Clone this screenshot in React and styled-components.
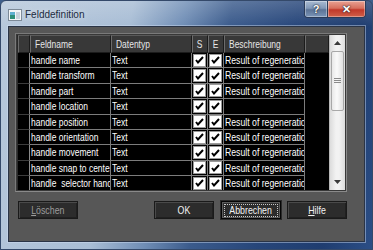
import React from "react";
import styled, { createGlobalStyle } from "styled-components";

const Global = createGlobalStyle`
  html, body { margin: 0; padding: 0; background: #3f5f8c; }
  body { width: 373px; height: 250px; overflow: hidden; }
`;

const SANS = `"Liberation Sans", Arial, sans-serif`;

const Window = styled.div`
  width: 373px;
  height: 250px;
  box-sizing: border-box;
  display: flex;
  flex-direction: column;
  border-radius: 6px 6px 0 0;
  border: 1px solid #34496a;
  background:
    linear-gradient(180deg, rgba(255,255,255,0.18) 0px, rgba(255,255,255,0) 26px),
    linear-gradient(100deg, #b7c8db 0%, #a8bdd5 32%, #6f8db5 45%, #3b5b8c 56%, #27467a 72%, #1f3d70 88%, #2b4e86 100%);
`;

const TitleBar = styled.div`
  height: 25px;
  display: flex;
  align-items: flex-start;
  padding-left: 6px;
  padding-right: 6px;
`;

const TitleIcon = styled.svg`
  width: 16px;
  height: 16px;
  margin-top: 6px;
  flex: none;
`;

const Title = styled.div`
  margin-left: 2px;
  margin-top: 8px;
  font-family: ${SANS};
  font-size: 10px;
  color: #1c2a3e;
  text-shadow: 0 0 6px rgba(255,255,255,0.7);
  flex: 1;
`;

const CaptionGroup = styled.div`
  display: flex;
  border: 1px solid #2a3b58;
  border-top: none;
  border-radius: 0 0 4px 4px;
  overflow: hidden;
  height: 16px;
`;

const CaptionButton = styled.div`
  width: ${p => p.$w}px;
  height: 16px;
  display: flex;
  align-items: center;
  justify-content: center;
  box-sizing: border-box;
  color: #fff;
  font-family: ${SANS};
  font-weight: bold;
  font-size: 11px;
  text-shadow: 0 0 2px #223, 0 0 1px #000;
  background: ${p => p.$close
    ? "linear-gradient(180deg, #e8a293 0%, #d6705e 45%, #c1392a 55%, #d0604a 100%)"
    : "linear-gradient(180deg, #a9bbd2 0%, #8299b8 45%, #5b7396 55%, #7b95b8 100%)"};
  box-shadow: inset 0 0 0 1px rgba(255,255,255,0.35);
  & + & { border-left: 1px solid #2a3b58; }
`;

const Client = styled.div`
  flex: 1;
  margin: 0 7px 7px 7px;
  background: #575757;
  border: 1px solid #2a3446;
  box-shadow: 0 0 0 1px rgba(210,225,245,0.45);
  display: flex;
  flex-direction: column;
  padding: 6px 17px 0 6px;
`;

const TableFrame = styled.div`
  height: 159px;
  box-sizing: border-box;
  border: 1px solid #7a7a7a;
  border-right-color: #8a8a8a;
  border-bottom-color: #8a8a8a;
  display: flex;
  background: #383838;
  padding: 1px;
`;

const GridArea = styled.div`
  flex: 1;
  background: #000;
  overflow: hidden;
  border-left: 1px solid #2a2a2a;
`;

const COLS = "12px 81px 81px 16px 16px 81px 1fr";

const Txt = styled.span`
  display: inline-block;
  white-space: pre;
  transform: scaleX(${p => p.$sx || 0.77});
  transform-origin: ${p => (p.$mid ? "center" : "left")} center;
`;

const HeaderRow = styled.div`
  display: grid;
  grid-template-columns: ${COLS};
  height: 18px;
  background: #363636;
`;

const HeaderCell = styled.div`
  box-sizing: border-box;
  border-left: 1px solid #6c6c6c;
  border-top: 1px solid #5a5a5a;
  border-right: 1px solid #1c1c1c;
  border-bottom: 1px solid #1c1c1c;
  background: #383838;
  color: #e6e6e6;
  font-family: ${SANS};
  font-size: 11px;
  line-height: 16px;
  padding-left: ${p => (p.$center ? 0 : 4)}px;
  text-align: ${p => (p.$center ? "center" : "left")};
  white-space: nowrap;
  overflow: hidden;
`;

const DataRow = styled.div`
  display: grid;
  grid-template-columns: ${COLS};
  height: 15.4px;
`;

const Cell = styled.div`
  box-sizing: border-box;
  border-right: ${p => (p.$noline ? "none" : "1px solid #7c7c7c")};
  border-bottom: ${p => (p.$noline ? "none" : "1px solid #7c7c7c")};
  background: #000;
  color: #fff;
  font-family: ${SANS};
  font-size: 11px;
  line-height: 14px;
  padding-left: 1px;
  white-space: nowrap;
  overflow: hidden;
`;

const RowHead = styled(Cell)`
  border-right: 1px solid #8a8a8a;
  border-bottom: 1px solid #3c3c3c;
`;

const CheckCell = styled(Cell)`
  display: flex;
  align-items: center;
  justify-content: center;
  padding: 0;
`;

const CheckBox = styled.div`
  width: 13px;
  height: 13px;
  box-sizing: border-box;
  background: #fff;
  border: 1px solid #9a9a9a;
  display: flex;
  align-items: center;
  justify-content: center;
`;

const Scrollbar = styled.div`
  width: 15px;
  display: flex;
  flex-direction: column;
  background: linear-gradient(90deg, #dcdcdc 0%, #f2f2f2 40%, #f2f2f2 60%, #dcdcdc 100%);
  border-left: 1px solid #b8b8b8;
`;

const ArrowButton = styled.div`
  height: 16px;
  display: flex;
  align-items: center;
  justify-content: center;
`;

const Thumb = styled.div`
  height: 60px;
  margin: 0 1px;
  box-sizing: border-box;
  border: 1px solid #a8a8a8;
  border-radius: 2px;
  background: linear-gradient(90deg, #e8e8e8 0%, #fafafa 45%, #e0e0e0 100%);
  display: flex;
  align-items: center;
  justify-content: center;
`;

const Track = styled.div`
  flex: 1;
`;

const ButtonRow = styled.div`
  display: flex;
  margin-top: 9px;
  padding-left: 3px;
`;

const Button = styled.div`
  width: 60px;
  height: 18px;
  box-sizing: border-box;
  margin-left: ${p => p.$ml || 0}px;
  background: #2c2c2c;
  border: ${p => (p.$focus ? "1px solid #050505" : "1px solid #1a1a1a")};
  box-shadow: ${p => (p.$focus
    ? "inset 0 0 0 1px #5c5c5c, 0 0 0 1px #2a2a2a"
    : "inset 1px 1px 0 #4a4a4a, inset -1px -1px 0 #202020")};
  color: ${p => (p.$disabled ? "#9c9c9c" : "#f2f2f2")};
  font-family: ${SANS};
  font-size: 11px;
  display: flex;
  align-items: center;
  justify-content: center;
  overflow: hidden;
`;

const FocusRing = styled.div`
  width: 54px;
  height: 13px;
  box-sizing: border-box;
  border: 1px dotted #c8c8c8;
  display: flex;
  align-items: center;
  justify-content: center;
  line-height: 11px;
`;

const Spacer = styled.div`
  flex: 1;
`;

const U = styled.span`
  text-decoration: underline;
`;

const rows = [
  ["handle name", "Text", true],
  ["handle transform", "Text", true],
  ["handle part", "Text", true],
  ["handle location", "Text", false],
  ["handle position", "Text", true],
  ["handle orientation", "Text", true],
  ["handle movement", "Text", true],
  ["handle snap to center", "Text", true],
  ["handle  selector handle", "Text", true],
];

const Check = () => (
  <svg width="9" height="8" viewBox="0 0 9 8">
    <path d="M1 4 L3 6.5 L8 1" fill="none" stroke="#000" strokeWidth="2" />
  </svg>
);

export default function App() {
  return (
    <>
      <Global />
      <Window>
        <TitleBar>
          <TitleIcon viewBox="0 0 16 16">
            <rect x="1.5" y="2.5" width="13" height="11" fill="#f4f6f8" stroke="#7d8a98" />
            <rect x="3" y="5" width="5" height="7" fill="#2f8f7a" />
            <rect x="3" y="5" width="5" height="3" fill="#5fb0d0" />
            <rect x="9" y="5" width="4" height="7" fill="#c9d3dc" />
          </TitleIcon>
          <Title>Felddefinition</Title>
          <CaptionGroup>
            <CaptionButton $w={22}>?</CaptionButton>
            <CaptionButton $w={38} $close>✕</CaptionButton>
          </CaptionGroup>
        </TitleBar>
        <Client>
          <TableFrame>
            <GridArea>
              <HeaderRow>
                <HeaderCell />
                <HeaderCell><Txt>Feldname</Txt></HeaderCell>
                <HeaderCell><Txt>Datentyp</Txt></HeaderCell>
                <HeaderCell $center><Txt $mid>S</Txt></HeaderCell>
                <HeaderCell $center><Txt $mid>E</Txt></HeaderCell>
                <HeaderCell><Txt>Beschreibung</Txt></HeaderCell>
                <HeaderCell />
              </HeaderRow>
              {rows.map(([name, type, desc], i) => (
                <DataRow key={i}>
                  <RowHead />
                  <Cell><Txt>{name}</Txt></Cell>
                  <Cell><Txt>{type}</Txt></Cell>
                  <CheckCell><CheckBox><Check /></CheckBox></CheckCell>
                  <CheckCell><CheckBox><Check /></CheckBox></CheckCell>
                  <Cell>{desc ? <Txt $sx={0.79}>Result of regeneration</Txt> : null}</Cell>
                  <Cell $noline />
                </DataRow>
              ))}
            </GridArea>
            <Scrollbar>
              <ArrowButton>
                <svg width="7" height="4" viewBox="0 0 7 4"><path d="M0 4 L3.5 0 L7 4Z" fill="#3a3a3a" /></svg>
              </ArrowButton>
              <Thumb>
                <svg width="7" height="6" viewBox="0 0 7 6">
                  <path d="M0 0.5H7M0 2.5H7M0 4.5H7" stroke="#8a8a8a" strokeWidth="1" />
                </svg>
              </Thumb>
              <Track />
              <ArrowButton>
                <svg width="7" height="4" viewBox="0 0 7 4"><path d="M0 0 L3.5 4 L7 0Z" fill="#3a3a3a" /></svg>
              </ArrowButton>
            </Scrollbar>
          </TableFrame>
          <ButtonRow>
            <Button $disabled><Txt $mid $sx={0.8}><U>L</U>öschen</Txt></Button>
            <Spacer />
            <Button><Txt $mid $sx={0.8}>OK</Txt></Button>
            <Button $ml={7} $focus><FocusRing><Txt $mid $sx={0.8}>Abbrechen</Txt></FocusRing></Button>
            <Button $ml={6}><Txt $mid $sx={0.8}><U>H</U>ilfe</Txt></Button>
          </ButtonRow>
        </Client>
      </Window>
    </>
  );
}
